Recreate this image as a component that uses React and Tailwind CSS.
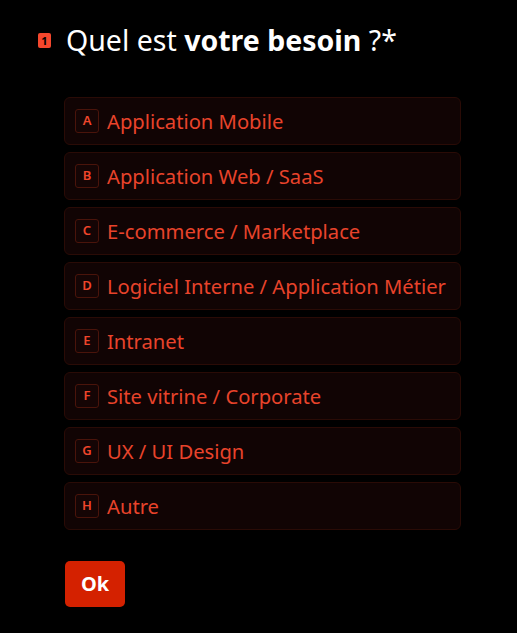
import React from "react";

const options = [
  ["A", "Application Mobile"],
  ["B", "Application Web / SaaS"],
  ["C", "E-commerce / Marketplace"],
  ["D", "Logiciel Interne / Application Métier"],
  ["E", "Intranet"],
  ["F", "Site vitrine / Corporate"],
  ["G", "UX / UI Design"],
  ["H", "Autre"],
];

export default function App() {
  return (
    <div
      className="w-[517px] h-[633px] bg-black text-white overflow-hidden"
      style={{ fontFamily: '"Noto Sans", "Open Sans", sans-serif' }}
    >
      <div className="pl-[38px] pt-[20px]">
        <div className="flex items-center h-[40px]">
          <span className="w-[13px] h-[15px] rounded-[2px] bg-[#f4472d] text-black text-[11px] font-bold flex items-center justify-center leading-none">
            1
          </span>
          <h1 className="ml-[15px] text-[28.5px] leading-none">
            Quel est <span className="font-bold">votre besoin</span> ?*
          </h1>
        </div>
      </div>
      <div className="ml-[64px] w-[397px] mt-[37px] flex flex-col gap-[7px]">
        {options.map(([k, label]) => (
          <div
            key={k}
            className="h-[48px] rounded-[6px] bg-[#110404] border border-[#2a0b06] flex items-center pl-[10px]"
          >
            <span className="w-[24px] h-[24px] rounded-[3px] border border-[#4a140b] bg-[#150505] text-[#f0452b] text-[13px] font-semibold flex items-center justify-center">
              {k}
            </span>
            <span className="ml-[8px] text-[20.2px] text-[#e8432b] leading-none whitespace-nowrap">
              {label}
            </span>
          </div>
        ))}
      </div>
      <button className="ml-[65px] mt-[31px] w-[60px] h-[46px] rounded-[5px] bg-[#d42100] text-white text-[20px] font-bold">
        Ok
      </button>
    </div>
  );
}
